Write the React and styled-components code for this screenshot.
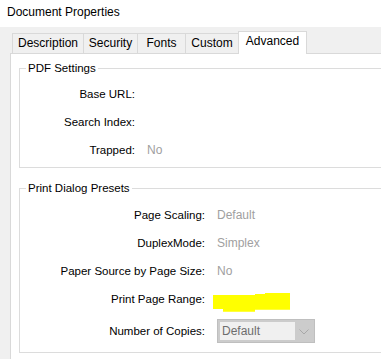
import styled, { createGlobalStyle } from "styled-components";

const GlobalStyle = createGlobalStyle`
  html, body {
    margin: 0;
    padding: 0;
    background: #ffffff;
    overflow: hidden;
  }
  body {
    font-family: "Liberation Sans", Arial, sans-serif;
    font-size: 12px;
    color: #000000;
  }
`;

const tabs = [
  { label: "Description", width: 72 },
  { label: "Security", width: 55 },
  { label: "Fonts", width: 49 },
  { label: "Custom", width: 54 },
  { label: "Advanced", width: 69, active: true },
];

const pdfRows = [
  { label: "Base URL:", value: "" },
  { label: "Search Index:", value: "" },
  { label: "Trapped:", value: "No" },
];

const printRows = [
  { label: "Page Scaling:", value: "Default" },
  { label: "DuplexMode:", value: "Simplex" },
  { label: "Paper Source by Page Size:", value: "No" },
];

function Highlight() {
  return (
    <Marker width="78" height="19" viewBox="0 0 78 19">
      <polygon
        points="0,2 42,2 42,1 52,1 52,0 77,0 77,16.7 42,16.7 42,18.7 10,18.7 10,16 0,16"
        fill="#ffff00"
      />
    </Marker>
  );
}

function App() {
  return (
    <Window>
      <GlobalStyle />
      <Title>Document Properties</Title>
      <Body>
        <TabStrip>
          {tabs.map((t) => (
            <Tab key={t.label} $width={t.width} $active={t.active}>
              {t.label}
            </Tab>
          ))}
        </TabStrip>
        <Panel>
          <Group>
            <Legend>PDF Settings</Legend>
            <Rows $top={5} $bottom={3}>
              {pdfRows.map((r) => (
                <Row key={r.label} $labelWidth={115}>
                  <Label>{r.label}</Label>
                  <Value>{r.value}</Value>
                </Row>
              ))}
            </Rows>
          </Group>
          <Group $spaced>
            <Legend>Print Dialog Presets</Legend>
            <Rows $top={6} $bottom={7}>
              {printRows.map((r) => (
                <Row key={r.label} $labelWidth={185}>
                  <Label>{r.label}</Label>
                  <Value>{r.value}</Value>
                </Row>
              ))}
              <Row $labelWidth={185}>
                <Label>Print Page Range:</Label>
                <Value>
                  <Highlight />
                </Value>
              </Row>
              <Row $labelWidth={185} $offset={4}>
                <Label>Number of Copies:</Label>
                <Combo>
                  <ComboField>Default</ComboField>
                  <ComboArrow>
                    <svg width="10" height="6" viewBox="0 0 10 6">
                      <polyline
                        points="0.5,0.5 5,5 9.5,0.5"
                        fill="none"
                        stroke="#a8a8a8"
                        strokeWidth="1"
                      />
                    </svg>
                  </ComboArrow>
                </Combo>
              </Row>
            </Rows>
          </Group>
        </Panel>
      </Body>
    </Window>
  );
}

export default App;

const Window = styled.div`
  width: 100%;
  height: 359px;
  display: flex;
  flex-direction: column;
  overflow: hidden;
`;

const Title = styled.div`
  height: 27px;
  padding-left: 7px;
  line-height: 24px;
  font-size: 12px;
  color: #000;
`;

const Body = styled.div`
  flex: 1;
  display: flex;
  flex-direction: column;
  background: #f0f0f0;
  padding: 4px 0 0 10px;
  min-height: 0;
`;

const TabStrip = styled.div`
  display: flex;
  align-items: flex-end;
  height: 22px;
  padding-left: 2px;
  position: relative;
  z-index: 1;
`;

const Tab = styled.div`
  box-sizing: border-box;
  width: ${(p) => p.$width}px;
  height: ${(p) => (p.$active ? 23 : 20)}px;
  margin-left: -1px;
  margin-bottom: ${(p) => (p.$active ? -1 : 0)}px;
  border: 1px solid #d9d9d9;
  border-bottom: none;
  background: ${(p) => (p.$active ? "#ffffff" : "#f0f0f0")};
  text-align: center;
  line-height: ${(p) => (p.$active ? 18 : 19)}px;
  font-size: 12px;
  color: #000;
  position: relative;
  z-index: ${(p) => (p.$active ? 2 : 1)};

  &:first-child {
    margin-left: 0;
  }
`;

const Panel = styled.div`
  flex: 1;
  background: #ffffff;
  border-top: 1px solid #d9d9d9;
  border-left: 1px solid #d9d9d9;
  padding-left: 8px;
  overflow: hidden;
`;

const Group = styled.fieldset`
  margin: ${(p) => (p.$spaced ? 13 : 7)}px -4px 0 0;
  padding: 0;
  border: 1px solid #dcdcdc;
  min-inline-size: 0;
`;

const Legend = styled.legend`
  margin-left: 6px;
  padding: 0 2px;
  line-height: 14px;
  font-size: 11.5px;
  color: #000;
`;

const Rows = styled.div`
  padding: ${(p) => p.$top}px 0 ${(p) => p.$bottom}px 0;
`;

const Row = styled.div`
  display: grid;
  grid-template-columns: ${(p) => p.$labelWidth}px auto;
  column-gap: 12px;
  align-items: center;
  height: 28px;
  margin-top: ${(p) => p.$offset || 0}px;
`;

const Label = styled.div`
  text-align: right;
  font-size: 11.5px;
  color: #000;
  white-space: nowrap;
`;

const Value = styled.div`
  font-size: 12px;
  color: #a0a0a0;
  display: flex;
  align-items: center;
`;

const Marker = styled.svg`
  display: block;
  margin: 7px 0 0 -4px;
`;

const Combo = styled.div`
  box-sizing: border-box;
  width: 98px;
  height: 24px;
  border: 1px solid #bfbfbf;
  background: #cccccc;
  display: flex;
  padding: 2px;
`;

const ComboField = styled.div`
  width: 75px;
  background: #f0f0f0;
  color: #6d6d6d;
  font-size: 12px;
  line-height: 18px;
  padding-left: 2px;
  box-sizing: border-box;
`;

const ComboArrow = styled.div`
  flex: 1;
  display: flex;
  align-items: center;
  justify-content: center;
  padding-top: 1px;
`;
